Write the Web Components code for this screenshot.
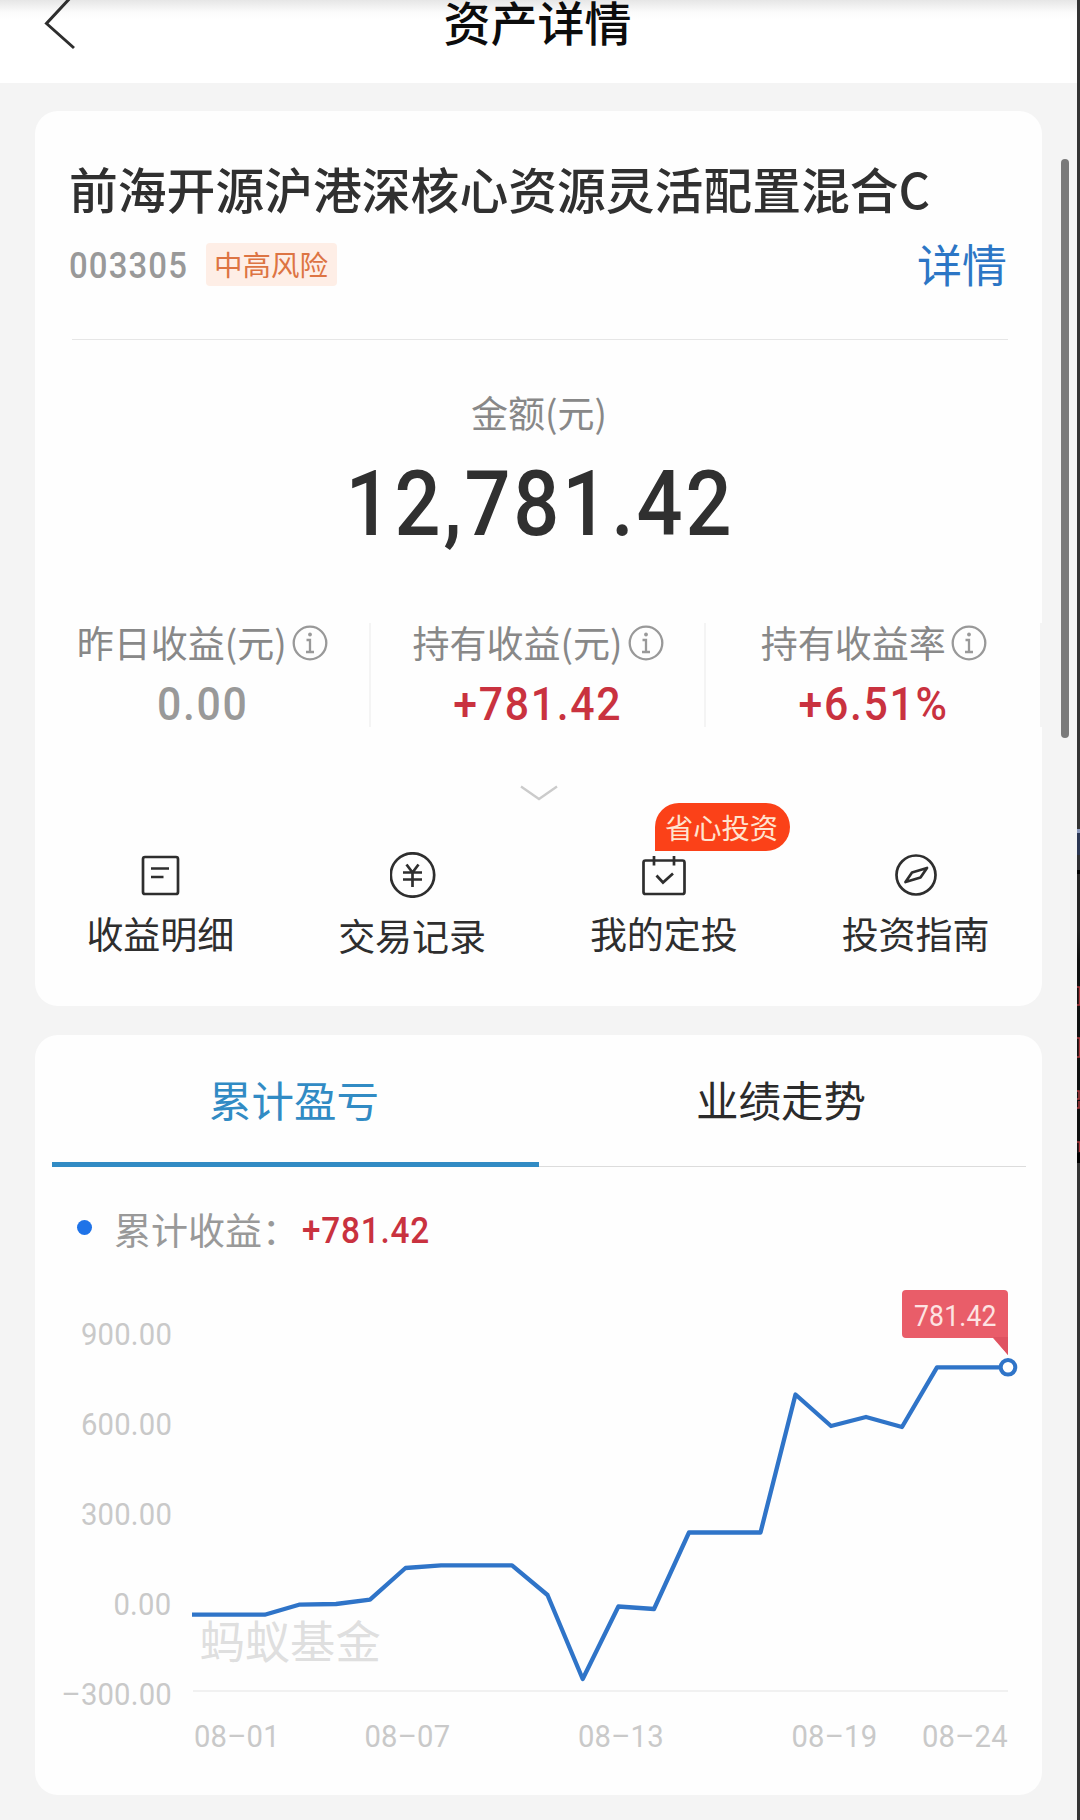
<!DOCTYPE html>
<html lang="zh-CN">
<head>
<meta charset="utf-8">
<title>资产详情</title>
<style>
html,body{margin:0;padding:0;height:1820px;overflow:hidden;background:#f4f4f4}
body{font-family:"Noto Sans CJK SC","Noto Sans",sans-serif;color:#303030;--num:Roboto,"Noto Sans CJK SC",sans-serif;--red:#c9323f}
</style>
</head>
<body>
<asset-page></asset-page>
<script>
const define = (name, html, setup) => customElements.define(name, class extends HTMLElement {
  connectedCallback() {
    if (this.shadowRoot) return;
    const t = document.createElement('template');
    t.innerHTML = typeof html === 'function' ? html(this) : html;
    this.attachShadow({ mode: 'open' }).append(t.content.cloneNode(true));
    if (setup) setup(this);
  }
});

define('nav-header', `<style>
:host{display:flex;height:83px;position:relative;justify-content:center;background:linear-gradient(#e6e6e6,#fbfbfb 12px,#fff 20px)}
svg{position:absolute;left:38px;top:0}
h1{margin:0 5px 0 0;font-size:47px;line-height:42px;height:42px;font-weight:500;color:#0c0c0c}
</style>
<svg width="40" height="50" fill="none" stroke="#2e2e2e" stroke-width="3"><path d="M34-4 8.500 23.500 36 48"/></svg>
<h1><slot></slot></h1>`);

define('white-card', `<style>
:host{display:flex;flex-direction:column;box-sizing:border-box;background:#fefefe;border-radius:23px;overflow:hidden}
</style><slot></slot>`);

define('fund-head', `<style>
:host{display:block;margin:0 34px 0 37px;padding-top:47px;border-bottom:1px solid #e6e6e6;height:181px}
h2{margin:0 0 24px -3px;font-size:48.800px;line-height:60px;font-weight:500;color:#303030;white-space:nowrap}
.row{display:flex;height:44px;align-items:center;margin-left:-3px}
.code{font:500 36.500px/44px var(--num);color:#999;letter-spacing:1.300px;margin-top:3px;width:119px;transform:scaleX(.9);transform-origin:0 0;white-space:nowrap}
.risk{margin-left:18px;background:#feeee6;color:#dd7443;font-size:28.500px;line-height:42px;height:43px;padding:0 9px 0 8px;border-radius:4px}
.more{margin:0 1px 0 auto;color:#2c76c5;font-size:45px;line-height:40px}
</style>
<h2><slot></slot></h2>
<div class="row"><span class="code">003305</span><span class="risk">中高风险</span><span class="more">详情</span></div>`);

define('total-amount', `<style>
:host{display:flex;flex-direction:column;align-items:center;margin-top:50px}
span{font-size:37px;line-height:44px;color:#888;padding-left:1px}
b{font:500 90px/100px var(--num);letter-spacing:3.200px;margin:21px 0 0 3px;color:#303030;transform:scaleX(.9)}
</style><span>金额(元)</span><b><slot></slot></b>`);

define('stat-row', `<style>
:host{display:flex;height:104px;margin-top:68px}
</style><slot></slot>`);

define('stat-cell', el => `<style>
:host{flex:1;display:flex;flex-direction:column;align-items:center;box-sizing:border-box;border-right:2px solid #f4f4f4}
.l{display:flex;align-items:center;height:36px;gap:5px;font-size:37px;line-height:36px;color:#888;white-space:nowrap;padding-left:1px}
.l span{position:relative;top:1px}
svg{display:block;margin-top:3px}
.v{font:500 46.500px/46px var(--num);letter-spacing:1.800px;margin:22px 0 0 1px;transform:scaleX(.92);color:${el.hasAttribute('flat') ? '#999' : 'var(--red)'}}
</style>
<div class="l"><span>${el.getAttribute('label')}</span>
<svg width="36" height="36" fill="none" stroke="#999" stroke-width="2.300"><circle cx="18" cy="18" r="16.300"/><circle cx="18" cy="9.500" r="1.900" fill="#999" stroke="none"/><path d="M14.500 15H18v11.500M14 27h8" /></svg></div>
<div class="v"><slot></slot></div>`);

define('expand-arrow', `<style>:host{display:flex;justify-content:center;margin-top:58px;height:16px}</style>
<svg width="40" height="16" fill="none" stroke="#cbcbcb" stroke-width="2.300"><path d="M2 1.500 20 14 38 1.500"/></svg>`);

const icons = {
  detail: '<rect x="5" y="5" width="35" height="37" rx="2"/><path d="M13 16.500h18M13 25h12.500"/>',
  trade: '<circle cx="22.500" cy="23" r="21.700"/><path d="M16.500 12.500l6 8 6-8M13 20.500h19M13 27.500h19M22.500 20.500V35"/>',
  plan: '<rect x="2.500" y="8.500" width="41" height="33.500" rx="2"/><path d="M13 4v9.500M33 4v9.500M15.500 23.500l6.500 7L32 21.500"/>',
  guide: '<circle cx="23" cy="23" r="19.500"/><path d="M12.500 30 19 20.500 34 16 27.500 25.500Z" stroke-linejoin="round"/>'
};
define('action-item', el => `<style>
:host{flex:1;display:flex;flex-direction:column;align-items:center;position:relative;font-size:37px;line-height:40px;color:#2e2e2e}
svg{display:block;height:46px;width:46px;margin-bottom:${el.getAttribute('icon') === 'trade' ? 17 : 15}px}
span{margin-left:-1px}
i{position:absolute;left:116px;top:-49px;width:135px;height:48px;box-sizing:border-box;border-radius:24px 24px 24px 0;background:#fb4118;color:#ffe3cf;font-style:normal;font-size:28.300px;line-height:47px;text-align:center;padding-right:1px}
</style>
<svg viewBox="0 0 46 46" fill="none" stroke="#2e2e2e" stroke-width="2.700">${icons[el.getAttribute('icon')]}</svg>
<span><slot></slot></span>${el.hasAttribute('tag') ? `<i>${el.getAttribute('tag')}</i>` : ''}`);

define('action-bar', `<style>:host{display:flex;margin-top:51px}</style><slot></slot>`);

define('tab-bar', `<style>
:host{display:flex;height:133px;margin:0 16px 0 17px}
div{flex:1;box-sizing:border-box;padding:39px 3px 0 0;text-align:center;font-size:42.500px;line-height:50px;color:#2b2b2b;border-bottom:1px solid #dcdcdc}
.on{color:#318bc4;border-bottom:5px solid #318bc4}
</style><div class="on">累计盈亏</div><div>业绩走势</div>`);

define('chart-legend', `<style>
:host{display:flex;align-items:center;height:40px;margin:41px 0 0 42px;font-size:37px;line-height:40px;color:#999}
i{width:15px;height:15px;border-radius:50%;background:#1f73e8;margin:-1px 22px 0 0}
span{padding-top:2px}
b{font:500 37px/40px var(--num);color:var(--red);letter-spacing:.9px;margin:5px 0 0 3px;transform:scaleX(.9);transform-origin:0 0}
</style><i></i><span>累计收益：</span><b>+781.42</b>`);

define('profit-chart', () => {
  const pts = [[192,1614.7],[264.7,1614.7],[299,1604.7],[336,1604],[370,1599.7],[405.5,1568],[441,1565.4],[512,1565.4],[547.5,1595],[582.7,1679],[618.4,1606.5],[654,1609],[689,1532.5],[760.5,1532.5],[795.5,1394.5],[831,1426],[866,1417],[902,1427],[937,1367.3],[1008,1367.3]];
  const ys = [['900.00',81,1345.5],['600.00',81,1435.5],['300.00',81,1525.5],['0.00',113.5,1615],['–300.00',61.5,1705.5]];
  const xs = [['08–01',193.5],['08–07',364],['08–13',577.5],['08–19',791],['08–24',921.5]];
  const num = (t, x, y) => `<text class="n" transform="translate(${x} ${y}) scale(.92 1)">${t}</text>`;
  return `<style>
:host{display:block;height:547px}
svg{display:block;width:1006px;height:547px}
.n{font-family:var(--num);font-size:31.800px;fill:#c9c9c9;letter-spacing:.2px}
.tip{font-size:29.500px;fill:#fde3e2}
</style>
<svg viewBox="35 1248 1006 547">
<path d="M193 1691H1008" stroke="#ececec" stroke-width="1.500"/>
<text x="199.500" y="1659" font-size="45.300" fill="#dfdfdf">蚂蚁基金</text>
${ys.map(([t, x, y]) => num(t, x, y - 0.5)).join('')}
${xs.map(([t, x]) => num(t, x + 0.5, 1746.5)).join('')}
<polyline points="${pts.join(' ')}" fill="none" stroke="#2f74c8" stroke-width="4.300" stroke-linejoin="round"/>
<circle cx="1008" cy="1367.300" r="7.300" fill="#fff" stroke="#2f74c8" stroke-width="4"/>
<path d="M906 1290h98q4 0 4 4v61l-15-17h-87q-4 0-4-4v-40q0-4 4-4Z" fill="#e95d69"/>
<path d="M993 1337h15v18Z" fill="#df5361"/>
<text class="n tip" transform="translate(914 1325.500) scale(.9 1)">781.42</text>
</svg>`;
});

define('edge-strip', `<style>
:host{position:absolute;right:0;top:0;width:3px;height:1820px;background:linear-gradient(#333 0 829px,#8a98ba 829px 833px,#2b3652 833px 855px,#303033 855px 870px,#000 870px 874px,#252525 874px 930px,#101010 960px 1153px,#000 1153px 1163px,#343434 1163px)}
svg{display:block}
</style><svg width="3" height="1160" fill="none" stroke="#a8383d" stroke-width="1.500"><path d="M0 987h2.500v18H0M0 1038h2.500v19H0M0 1091h2v8H0M0 1108h2v-7M0 1142h2.500v10"/></svg>`);

define('scroll-thumb', `<style>:host{position:absolute;left:1061px;top:159px;width:8px;height:579px;border-radius:4px;background:#7a7a7a}</style>`);

define('asset-page', `<style>
:host{display:block;position:relative;width:1080px;height:1820px;background:#f4f4f4;overflow:hidden}
main{display:flex;flex-direction:column;gap:29px;padding:28px 38px 0 35px}
.a{height:895px}.b{height:760px}
</style>
<nav-header>资产详情</nav-header>
<main>
<white-card class="a">
<fund-head>前海开源沪港深核心资源灵活配置混合C</fund-head>
<total-amount>12,781.42</total-amount>
<stat-row><stat-cell label="昨日收益(元)" flat>0.00</stat-cell><stat-cell label="持有收益(元)">+781.42</stat-cell><stat-cell label="持有收益率">+6.51%</stat-cell></stat-row>
<expand-arrow></expand-arrow>
<action-bar><action-item icon="detail">收益明细</action-item><action-item icon="trade">交易记录</action-item><action-item icon="plan" tag="省心投资">我的定投</action-item><action-item icon="guide">投资指南</action-item></action-bar>
</white-card>
<white-card class="b">
<tab-bar></tab-bar>
<chart-legend></chart-legend>
<profit-chart></profit-chart>
</white-card>
</main>
<scroll-thumb></scroll-thumb>
<edge-strip></edge-strip>`);
</script>
</body>
</html>
